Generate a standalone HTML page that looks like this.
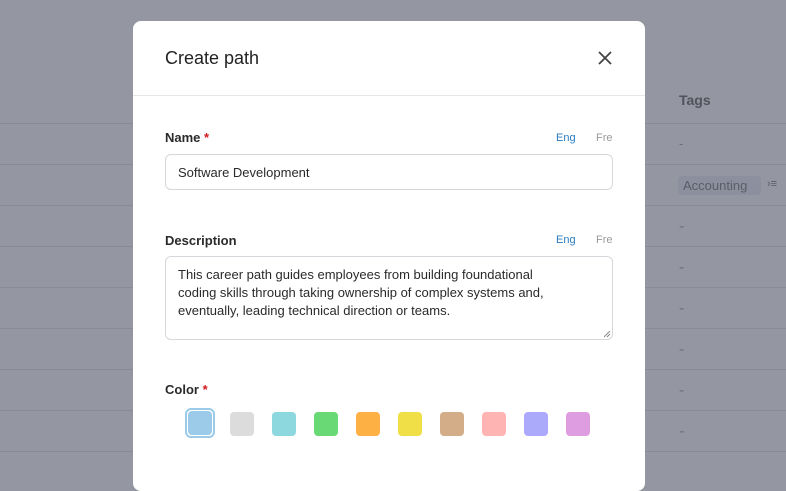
<!DOCTYPE html><html><head><style>
body{margin:0;width:786px;height:469px;overflow:hidden;background:#9497a1;font-family:"Liberation Sans",sans-serif;position:relative}
.l{position:absolute;left:0;width:786px;height:1px;background:#888b95}
.modal{position:absolute;left:133px;top:21px;width:512px;height:470px;background:#fff;border-radius:8px}
.t{position:absolute;color:#222}
.lab{font-size:13px;font-weight:bold;color:#2a2a2a}
.star{color:#d0191f}
.in{position:absolute;left:32px;width:448px;border:1px solid #d5d7dc;border-radius:6px;font-size:13px;color:#2a2a2a;box-sizing:border-box}
.sw{position:absolute;top:392px;width:24px;height:24px;border-radius:4px}
</style></head><body>
<div class="l" style="top:123px"></div><div class="l" style="top:164px"></div><div class="l" style="top:205px"></div><div class="l" style="top:246px"></div><div class="l" style="top:287px"></div><div class="l" style="top:328px"></div><div class="l" style="top:369px"></div><div class="l" style="top:410px"></div><div class="l" style="top:451px"></div>
<div class="t" style="left:679px;top:92px;font-size:14px;font-weight:bold;color:#50535c">Tags</div>
<div class="t" style="left:679px;top:136px;color:#6d7079;font-size:13px">-</div>
<div style="position:absolute;left:678px;top:176px;width:83px;height:19px;background:#8c909e;border-radius:4px;color:#5a5d66;font-size:13px;line-height:19px;text-indent:5px">Accounting</div>
<div class="t" style="left:767px;top:178px;color:#5a5d66;font-size:11px">›≡</div>
<div class="t" style="left:679px;top:218px;color:#6d7079">-</div><div class="t" style="left:679px;top:259px;color:#6d7079">-</div><div class="t" style="left:679px;top:300px;color:#6d7079">-</div><div class="t" style="left:679px;top:341px;color:#6d7079">-</div><div class="t" style="left:679px;top:382px;color:#6d7079">-</div><div class="t" style="left:679px;top:423px;color:#6d7079">-</div>
<div class="modal">
<div class="t" style="left:32px;top:27px;font-size:18px;color:#222">Create path</div>
<svg style="position:absolute;left:465px;top:30px" width="14" height="14" viewBox="0 0 14 14"><path d="M1 1L13 13M13 1L1 13" stroke="#444" stroke-width="1.8"/></svg>
<div style="position:absolute;left:0;top:74px;width:512px;height:1px;background:#e6e7ea"></div>
<div class="t lab" style="left:32px;top:109px">Name <span class="star">*</span></div>
<div class="t" style="left:423px;top:111px;font-size:11px;color:#2a7bc0">Eng</div>
<div class="t" style="left:463px;top:111px;font-size:11px;color:#999">Fre</div>
<div class="in" style="top:133px;height:36px;padding:10px 12px">Software Development</div>
<div class="t lab" style="left:32px;top:212px">Description</div>
<div class="t" style="left:423px;top:213px;font-size:11px;color:#2a7bc0">Eng</div>
<div class="t" style="left:463px;top:213px;font-size:11px;color:#999">Fre</div>
<div class="in" style="top:235px;height:84px;padding:9px 40px 9px 12px;line-height:18px">This career path guides employees from building foundational coding skills through taking ownership of complex systems and, eventually, leading technical direction or teams.</div>
<svg style="position:absolute;left:471px;top:310px" width="7" height="7"><path d="M6 0L0 6M6 3L3 6" stroke="#888" stroke-width="1"/></svg>
<div class="t lab" style="left:32px;top:361px">Color <span class="star">*</span></div>
<div style="position:absolute;left:52px;top:387px;width:30px;height:30px;border:2px solid #9ccbea;border-radius:6px;box-sizing:border-box"></div>
<div class="sw" style="left:55px;top:390px;background:#9ccbea"></div>
<div class="sw" style="left:97px;top:391px;background:#dcdcdc"></div>
<div class="sw" style="left:139px;top:391px;background:#8cd8de"></div>
<div class="sw" style="left:181px;top:391px;background:#68d974"></div>
<div class="sw" style="left:223px;top:391px;background:#fdb043"></div>
<div class="sw" style="left:265px;top:391px;background:#f0df47"></div>
<div class="sw" style="left:307px;top:391px;background:#d3ad87"></div>
<div class="sw" style="left:349px;top:391px;background:#ffb4b4"></div>
<div class="sw" style="left:391px;top:391px;background:#aba9fa"></div>
<div class="sw" style="left:433px;top:391px;background:#de9de0"></div>
</div>
</body></html>
